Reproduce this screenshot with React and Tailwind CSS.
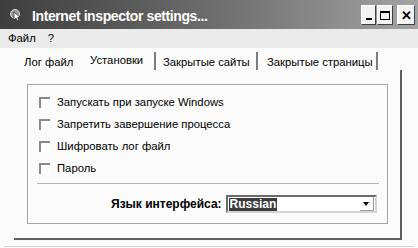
import React from 'react';

const options = [
  'Запускать при запуске Windows',
  'Запретить завершение процесса',
  'Шифровать лог файл',
  'Пароль',
];

const tabs = [
  { label: 'Лог файл', w: 'w-[66px]', pl: 'pl-[10px]', sep: false, active: false },
  { label: 'Установки', w: 'w-[76px]', pl: 'pl-[10px]', sep: true, active: true },
  { label: 'Закрытые сайты', w: 'w-[102px]', pl: 'pl-[7px]', sep: true, active: false },
  { label: 'Закрытые страницы', w: 'w-[120px]', pl: 'pl-[9px]', sep: true, active: false },
];

const AppIcon = () => (
  <svg width="14" height="14" viewBox="0 0 14 14">
    <circle cx="6" cy="6" r="4.5" fill="#9a9a9a" stroke="#d8d8d8" strokeWidth="1" />
    <path d="M5 4 L5 12 L7 10 L8.5 13 L10 12.3 L8.6 9.5 L11 9.3 Z" fill="#ffffff" stroke="#303030" strokeWidth="0.8" />
  </svg>
);

const TitleButton = ({ children, w }) => (
  <div className={`${w} h-[20px] bg-[#f2f2f2] border border-t-white border-l-white border-r-[#404040] border-b-[#404040] flex items-center justify-center`}>
    {children}
  </div>
);

const Checkbox = () => (
  <div className="w-[11px] h-[11px] border-t-2 border-l-2 border-t-[#8a8a8a] border-l-[#8a8a8a] bg-white shrink-0" />
);

export default function App() {
  return (
    <div className="w-[418px] h-[248px] overflow-hidden bg-[#fbfbfb] text-black font-['Liberation_Sans',Arial,sans-serif]">
      {/* Title bar */}
      <div className="h-[29px] flex items-start bg-gradient-to-r from-[#3e3e3e] via-[#6c6c6c] to-[#a4a4a4]">
        <div className="ml-[9px] mt-[8px]">
          <AppIcon />
        </div>
        <span className="ml-[9px] mt-[9px] text-white font-bold text-[14px] leading-[14px] tracking-[-0.4px]">
          Internet inspector settings...
        </span>
        <div className="ml-auto mt-[5px] mr-[3px] flex gap-[1px]">
          <TitleButton w="w-[15px]">
            <div className="w-[6px] h-[2px] bg-black mt-[8px]" />
          </TitleButton>
          <TitleButton w="w-[16px]">
            <div className="w-[10px] h-[9px] border border-t-2 border-black" />
          </TitleButton>
          <div className="w-[2px]" />
          <TitleButton w="w-[18px]">
            <span className="text-[13px] font-bold leading-none">✕</span>
          </TitleButton>
        </div>
      </div>

      {/* Menu bar */}
      <div className="h-[19px] bg-[#ebebeb] flex items-center text-[11.3px] pl-[8px] gap-[12px]">
        <span>Файл</span>
        <span>?</span>
      </div>

      {/* Tabs */}
      <div className="mt-[2px] h-[20px] flex pl-[14px] text-[11.3px]">
        {tabs.map((t) => (
          <div
            key={t.label}
            className={`${t.w} ${t.pl} h-[18px] mt-[2px] ${t.sep ? 'border-r-2 border-[#7c7c7c]' : ''} ${t.active ? 'pt-[2px]' : 'pt-[4px]'} leading-[13px] whitespace-nowrap`}
          >
            {t.label}
          </div>
        ))}
      </div>

      {/* Panel */}
      <div className="ml-[14px] w-[388px] h-[170px] border-r-2 border-b-2 border-[#5e5e5e] pt-[14px] pl-[13px]">
        <div className="w-[361px] h-[140px] border border-[#a4a4a4] flex flex-col">
          <div className="flex flex-col gap-[11px] pt-[12px] pl-[11px] text-[11.3px]">
            {options.map((o) => (
              <div key={o} className="flex items-center gap-[7px] h-[11px]">
                <Checkbox />
                <span className="leading-[13px]">{o}</span>
              </div>
            ))}
          </div>
          <div className="mt-[9px] ml-[9px] w-[342px] h-px bg-[#b4b4b4]" />
          <div className="mt-[11px] flex items-center">
            <span className="ml-[83px] font-bold text-[12px] leading-[14px]">Язык интерфейса:</span>
            <div className="ml-[4px] w-[151px] h-[18px] bg-white border-2 border-t-[#6a6a6a] border-l-[#6a6a6a] border-r-[#d4d4d4] border-b-[#d4d4d4] flex items-center">
              <span className="ml-[1px] px-[1px] bg-[#3c3c3c] text-white font-bold text-[12px] leading-[13px]">Russian</span>
              <div className="ml-auto mr-[1px] w-[14px] h-[14px] bg-white border-r border-b border-[#9a9a9a] flex items-center justify-center">
                <div className="w-0 h-0 border-l-[3.5px] border-r-[3.5px] border-t-[4px] border-l-transparent border-r-transparent border-t-black" />
              </div>
            </div>
          </div>
        </div>
      </div>

      <div className="mt-[6px] ml-[4px] w-[410px] h-px bg-[#d0d0d0]" />
    </div>
  );
}
